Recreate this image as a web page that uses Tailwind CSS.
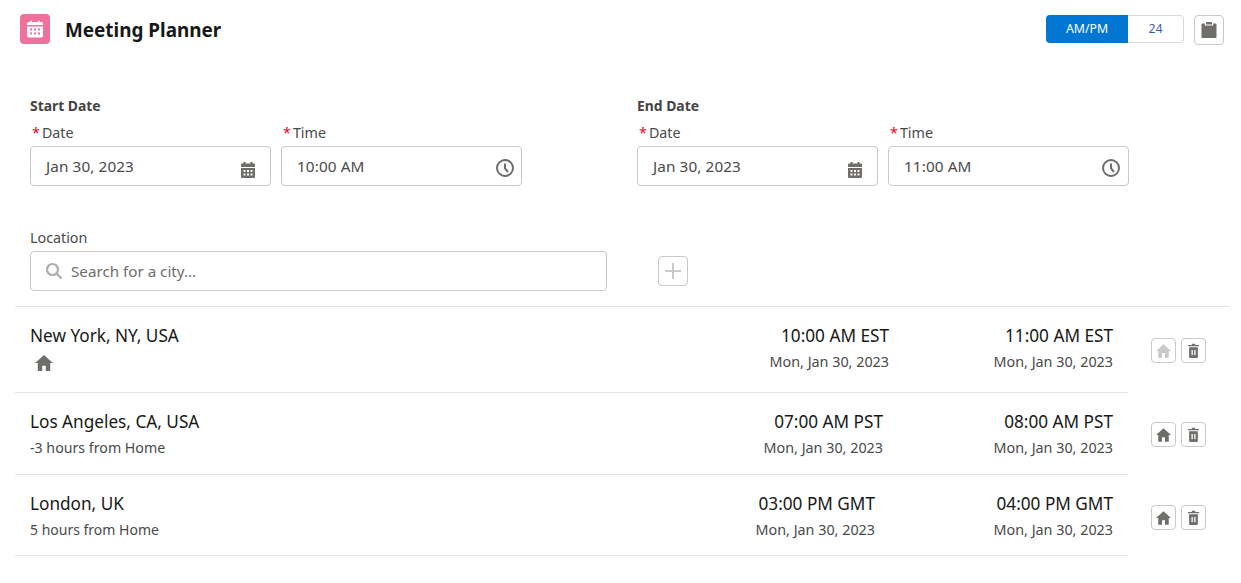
<!DOCTYPE html>
<html><head><meta charset="utf-8">
<script src="https://cdn.jsdelivr.net/npm/@tailwindcss/browser@4"></script>
</head>
<body class="bg-white font-['Noto_Sans','Open_Sans',sans-serif] text-[#181818] overflow-hidden">
<div class="w-[1241px] h-[583px] flex flex-col">
  <header class="h-[59px] pt-[14px] pl-[20px] pr-[17px] flex items-start">
    <div class="w-[30px] h-[30px] rounded-[4px] bg-[#f0729b] flex items-center justify-center">
      <svg viewBox="0 0 24 24" class="w-[24px] h-[24px]" fill="#fff"><path d="M4 9.500h16v9A2 2 0 0 1 18 20.500H6A2 2 0 0 1 4 18.500zM6 5h1.200V3.800h1.800V5h6V3.800h1.800V5H18a2 2 0 0 1 2 2v1H4V7a2 2 0 0 1 2-2z"/><g fill="#f0729b"><rect x="7" y="11.500" width="2" height="2"/><rect x="11" y="11.500" width="2" height="2"/><rect x="15" y="11.500" width="2" height="2"/><rect x="7" y="15.500" width="2" height="2"/><rect x="11" y="15.500" width="2" height="2"/><rect x="15" y="15.500" width="2" height="2"/></g></svg>
    </div>
    <h1 class="ml-[15px] text-[18.900px] leading-[32px] font-bold text-[#181818]">Meeting Planner</h1>
    <div class="ml-auto mt-[1px] flex items-start gap-[10px]">
      <div class="flex w-[138px] h-[28px] text-[12.300px]">
        <div class="w-[82px] rounded-l-[4px] bg-[#0176d3] text-white flex items-center justify-center">AM/PM</div>
        <div class="flex-1 rounded-r-[4px] border border-l-0 border-[#dddbda] text-[#3e5fb0] flex items-center justify-center">24</div>
      </div>
      <div class="w-[30px] h-[30px] rounded-[4px] border border-[#c9c9c9] flex items-center justify-center">
        <svg viewBox="0 0 16 16" class="w-[16px] h-[16px]" fill="#706e6b"><path d="M1.500 1.500h2.300V3.500h8.400V1.500h2.300A1 1 0 0 1 15.500 2.500V15a1 1 0 0 1-1 1H1.500a1 1 0 0 1-1-1V2.500a1 1 0 0 1 1-1z"/><path d="M5 .8A.8.8 0 0 1 5.800 0h4.400a.8.8 0 0 1 .8.8V2.500H5z"/></svg>
      </div>
    </div>
  </header>

  <section class="pl-[30px] pt-[37px] flex text-[#444]">
    <div class="w-[607px]">
      <div class="text-[13.900px] leading-[20px] font-bold text-[#444]">Start Date</div>
      <div class="mt-[7px] flex gap-[10px]">
        <div class="w-[241px]">
          <div class="text-[14.300px] leading-[20px] text-[#4a4a4a]"><span class="text-[#ea001e] ml-[2px] mr-[2px]">*</span>Date</div>
          <div class="relative mt-[3px] h-[40px] rounded-[4px] border border-[#c9c9c9] flex items-center pl-[15px] text-[15.300px] tracking-[0.1px] text-[#4a4a4a]">Jan 30, 2023
            <svg viewBox="0 0 16 18" class="absolute right-[14px] top-[14px] w-[16px] h-[18px]" fill="#706e6b"><path d="M1 7h14v9a1 1 0 0 1-1 1H2a1 1 0 0 1-1-1zM2 2.500h1.500V1h2v1.500h5V1h2v1.500H14a1 1 0 0 1 1 1V6H1V3.500a1 1 0 0 1 1-1z"/><g fill="#fff"><rect x="3.500" y="9" width="2" height="2"/><rect x="7" y="9" width="2" height="2"/><rect x="10.500" y="9" width="2" height="2"/><rect x="3.500" y="12.500" width="2" height="2"/><rect x="7" y="12.500" width="2" height="2"/><rect x="10.500" y="12.500" width="2" height="2"/></g></svg>
          </div>
        </div>
        <div class="w-[241px]">
          <div class="text-[14.300px] leading-[20px] text-[#4a4a4a]"><span class="text-[#ea001e] ml-[2px] mr-[2px]">*</span>Time</div>
          <div class="relative mt-[3px] h-[40px] rounded-[4px] border border-[#c9c9c9] flex items-center pl-[15px] text-[15.300px] tracking-[0.1px] text-[#4a4a4a]">10:00 AM
            <svg viewBox="0 0 20 20" class="absolute right-[6px] top-[11px] w-[20px] h-[20px]" fill="none" stroke="#706e6b"><circle cx="10" cy="10" r="8" stroke-width="2"/><path d="M10 5.500V10.500L13 14" stroke-width="2"/></svg>
          </div>
        </div>
      </div>
    </div>
    <div class="w-[492px]">
      <div class="text-[13.900px] leading-[20px] font-bold text-[#444]">End Date</div>
      <div class="mt-[7px] flex gap-[10px]">
        <div class="w-[241px]">
          <div class="text-[14.300px] leading-[20px] text-[#4a4a4a]"><span class="text-[#ea001e] ml-[2px] mr-[2px]">*</span>Date</div>
          <div class="relative mt-[3px] h-[40px] rounded-[4px] border border-[#c9c9c9] flex items-center pl-[15px] text-[15.300px] tracking-[0.1px] text-[#4a4a4a]">Jan 30, 2023
            <svg viewBox="0 0 16 18" class="absolute right-[14px] top-[14px] w-[16px] h-[18px]" fill="#706e6b"><path d="M1 7h14v9a1 1 0 0 1-1 1H2a1 1 0 0 1-1-1zM2 2.500h1.500V1h2v1.500h5V1h2v1.500H14a1 1 0 0 1 1 1V6H1V3.500a1 1 0 0 1 1-1z"/><g fill="#fff"><rect x="3.500" y="9" width="2" height="2"/><rect x="7" y="9" width="2" height="2"/><rect x="10.500" y="9" width="2" height="2"/><rect x="3.500" y="12.500" width="2" height="2"/><rect x="7" y="12.500" width="2" height="2"/><rect x="10.500" y="12.500" width="2" height="2"/></g></svg>
          </div>
        </div>
        <div class="w-[241px]">
          <div class="text-[14.300px] leading-[20px] text-[#4a4a4a]"><span class="text-[#ea001e] ml-[2px] mr-[2px]">*</span>Time</div>
          <div class="relative mt-[3px] h-[40px] rounded-[4px] border border-[#c9c9c9] flex items-center pl-[15px] text-[15.300px] tracking-[0.1px] text-[#4a4a4a]">11:00 AM
            <svg viewBox="0 0 20 20" class="absolute right-[7px] top-[11px] w-[20px] h-[20px]" fill="none" stroke="#706e6b"><circle cx="10" cy="10" r="8" stroke-width="2"/><path d="M10 5.500V10.500L13 14" stroke-width="2"/></svg>
          </div>
        </div>
      </div>
    </div>
  </section>

  <section class="pl-[30px] pt-[42px] flex items-start">
    <div class="w-[577px]">
      <div class="text-[14.300px] leading-[20px] text-[#4a4a4a]">Location</div>
      <div class="mt-[3px] h-[40px] rounded-[4px] border border-[#c9c9c9] flex items-center pl-[15px] text-[15.200px] text-[#706e6b]">
        <svg viewBox="0 0 18 18" class="w-[18px] h-[18px] mr-[7px] -ml-px" fill="none" stroke="#aeaeae" stroke-width="2.200"><circle cx="7.500" cy="7.500" r="5.500"/><path d="M11.500 11.500L16.500 16.500"/></svg>
        <span class="ml-px">Search for a city...</span>
      </div>
    </div>
    <div class="ml-[51px] mt-[28px] w-[30px] h-[30px] rounded-[4px] border border-[#c9c9c9] flex items-center justify-center">
      <svg viewBox="0 0 16 16" class="w-[16px] h-[16px]" stroke="#c9c9c9" stroke-width="2"><path d="M8 0V16M0 8H16"/></svg>
    </div>
  </section>

  <div class="mt-[15px] ml-[15px] w-[1215px] h-px bg-[#e5e5e5]"></div>

  <section class="ml-[15px]">
    <!-- New York -->
    <div class="flex h-[86px]">
      <div class="w-[1113px] border-b border-[#e5e5e5] flex pl-[15px]">
        <div class="flex-1 pt-[16px]">
          <div class="text-[17.200px] leading-[26px] text-[#181818]">New York, NY, USA</div>
          <svg viewBox="0 0 20 18" class="mt-[6px] ml-[5px] w-[18px] h-[16px]" fill="#706e6b"><path d="M10 0L20 9H17V18H12V12H8V18H3V9H0Z"/></svg>
        </div>
        <div class="pt-[16px] text-right">
          <div class="text-[17.200px] leading-[26px]">10:00 AM EST</div>
          <div class="mt-[3px] text-[14.350px] leading-[20px] text-[#4a4a4a]">Mon, Jan 30, 2023</div>
        </div>
        <div class="w-[239px] pr-[15px] pt-[16px] text-right">
          <div class="text-[17.200px] leading-[26px]">11:00 AM EST</div>
          <div class="mt-[3px] text-[14.350px] leading-[20px] text-[#4a4a4a]">Mon, Jan 30, 2023</div>
        </div>
      </div>
      <div class="ml-[23px] pt-[31px] flex items-start gap-[5px]">
        <div class="w-[25px] h-[25px] rounded-[4px] border border-[#c9c9c9] flex items-center justify-center">
          <svg viewBox="0 0 20 18" class="w-[15px] h-[14px]" fill="#c9c9c9"><path d="M10 0L20 9H17V18H12V12H8V18H3V9H0Z"/></svg>
        </div>
        <div class="w-[25px] h-[25px] rounded-[4px] border border-[#c9c9c9] flex items-center justify-center">
          <svg viewBox="0 0 14 16" class="w-[13px] h-[15px]" fill="#706e6b"><path d="M5.200.8h3.600v1.200h4.200v1.500H1V2h4.200zM2.300 4.500h9.400v10.500a1 1 0 0 1-1 1H3.300a1 1 0 0 1-1-1z"/><rect x="4.700" y="7.500" width="1.700" height="5.500" fill="#e8e8e8"/><rect x="7.600" y="7.500" width="1.700" height="5.500" fill="#e8e8e8"/></svg>
        </div>
      </div>
    </div>
    <!-- Los Angeles -->
    <div class="flex h-[82px]">
      <div class="w-[1113px] border-b border-[#e5e5e5] flex pl-[15px]">
        <div class="flex-1 pt-[16px]">
          <div class="text-[17.200px] leading-[26px]">Los Angeles, CA, USA</div>
          <div class="mt-[3px] text-[14.200px] leading-[20px] text-[#4a4a4a]">-3 hours from Home</div>
        </div>
        <div class="pt-[16px] text-right mr-[6px]">
          <div class="text-[17.200px] leading-[26px]">07:00 AM PST</div>
          <div class="mt-[3px] text-[14.350px] leading-[20px] text-[#4a4a4a]">Mon, Jan 30, 2023</div>
        </div>
        <div class="w-[239px] pr-[15px] pt-[16px] text-right">
          <div class="text-[17.200px] leading-[26px]">08:00 AM PST</div>
          <div class="mt-[3px] text-[14.350px] leading-[20px] text-[#4a4a4a]">Mon, Jan 30, 2023</div>
        </div>
      </div>
      <div class="ml-[23px] pt-[29px] flex items-start gap-[5px]">
        <div class="w-[25px] h-[25px] rounded-[4px] border border-[#c9c9c9] flex items-center justify-center">
          <svg viewBox="0 0 20 18" class="w-[15px] h-[14px]" fill="#706e6b"><path d="M10 0L20 9H17V18H12V12H8V18H3V9H0Z"/></svg>
        </div>
        <div class="w-[25px] h-[25px] rounded-[4px] border border-[#c9c9c9] flex items-center justify-center">
          <svg viewBox="0 0 14 16" class="w-[13px] h-[15px]" fill="#706e6b"><path d="M5.200.8h3.600v1.200h4.200v1.500H1V2h4.200zM2.300 4.500h9.400v10.500a1 1 0 0 1-1 1H3.300a1 1 0 0 1-1-1z"/><rect x="4.700" y="7.500" width="1.700" height="5.500" fill="#e8e8e8"/><rect x="7.600" y="7.500" width="1.700" height="5.500" fill="#e8e8e8"/></svg>
        </div>
      </div>
    </div>
    <!-- London -->
    <div class="flex h-[81px]">
      <div class="w-[1113px] border-b border-[#e5e5e5] flex pl-[15px]">
        <div class="flex-1 pt-[16px]">
          <div class="text-[17.200px] leading-[26px]">London, UK</div>
          <div class="mt-[3px] text-[14px] leading-[20px] text-[#4a4a4a]">5 hours from Home</div>
        </div>
        <div class="pt-[16px] text-right mr-[14px]">
          <div class="text-[17.200px] leading-[26px]">03:00 PM GMT</div>
          <div class="mt-[3px] text-[14.350px] leading-[20px] text-[#4a4a4a]">Mon, Jan 30, 2023</div>
        </div>
        <div class="w-[239px] pr-[15px] pt-[16px] text-right">
          <div class="text-[17.200px] leading-[26px]">04:00 PM GMT</div>
          <div class="mt-[3px] text-[14.350px] leading-[20px] text-[#4a4a4a]">Mon, Jan 30, 2023</div>
        </div>
      </div>
      <div class="ml-[23px] pt-[30px] flex items-start gap-[5px]">
        <div class="w-[25px] h-[25px] rounded-[4px] border border-[#c9c9c9] flex items-center justify-center">
          <svg viewBox="0 0 20 18" class="w-[15px] h-[14px]" fill="#706e6b"><path d="M10 0L20 9H17V18H12V12H8V18H3V9H0Z"/></svg>
        </div>
        <div class="w-[25px] h-[25px] rounded-[4px] border border-[#c9c9c9] flex items-center justify-center">
          <svg viewBox="0 0 14 16" class="w-[13px] h-[15px]" fill="#706e6b"><path d="M5.200.8h3.600v1.200h4.200v1.500H1V2h4.200zM2.300 4.500h9.400v10.500a1 1 0 0 1-1 1H3.300a1 1 0 0 1-1-1z"/><rect x="4.700" y="7.500" width="1.700" height="5.500" fill="#e8e8e8"/><rect x="7.600" y="7.500" width="1.700" height="5.500" fill="#e8e8e8"/></svg>
        </div>
      </div>
    </div>
  </section>
</div>
</body></html>
